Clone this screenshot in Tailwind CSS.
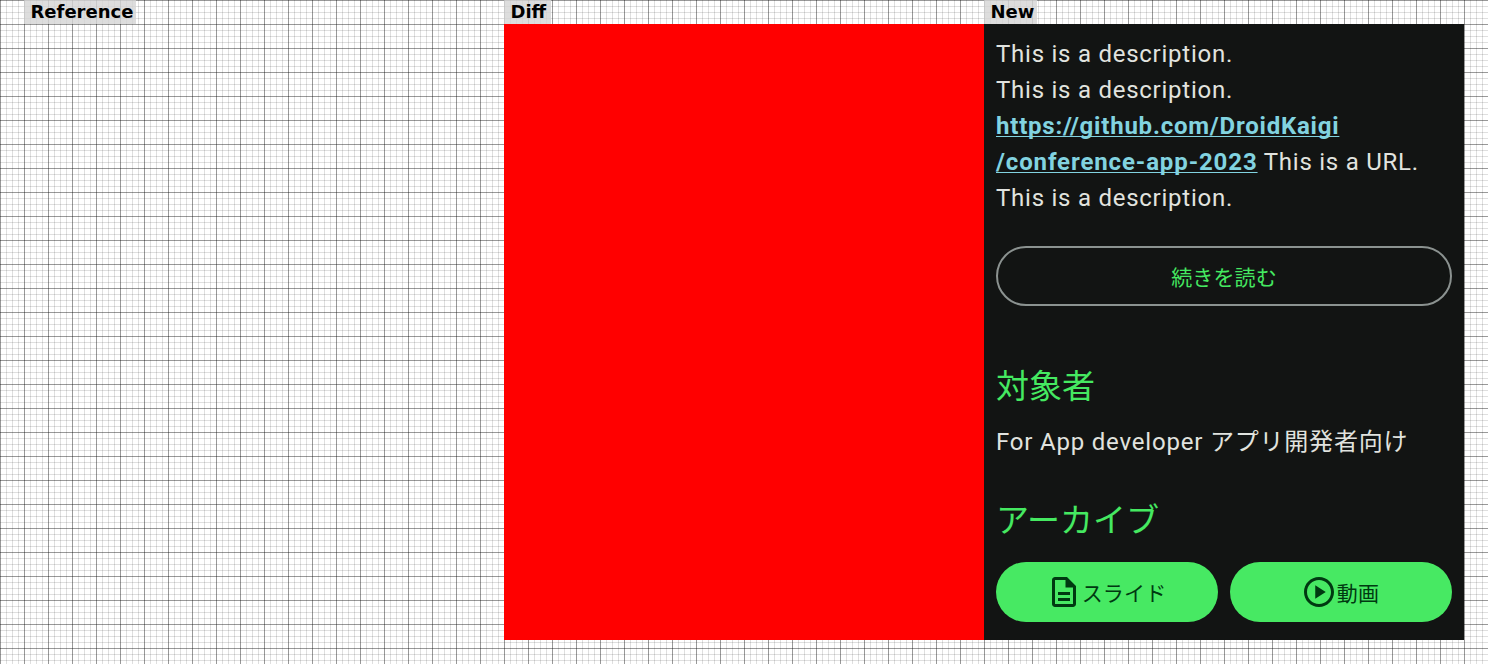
<!DOCTYPE html>
<html lang="ja">
<head>
<meta charset="utf-8">
<title>Screenshot comparison</title>
<script src="https://cdn.jsdelivr.net/npm/@tailwindcss/browser@4"></script>
</head>
<body class="w-[1488px] h-[664px] overflow-hidden bg-white bg-[linear-gradient(to_right,#00000050_1px,transparent_1px),linear-gradient(to_bottom,#00000050_1px,transparent_1px),linear-gradient(to_right,#00000020_1px,transparent_1px),linear-gradient(to_bottom,#00000020_1px,transparent_1px)] bg-[size:24px_24px,24px_24px,6px_6px,6px_6px] font-[Roboto,'Noto_Sans_CJK_JP',sans-serif]">
  <main class="grid grid-cols-[480px_480px_480px] grid-rows-[24px_616px] px-6">
    <h2 class="w-28 bg-[#d5d5d5]/80 pl-[6.5px] text-[18px] leading-[23px] font-bold text-black whitespace-nowrap font-['DejaVu_Sans',sans-serif]">Reference</h2>
    <h2 class="w-[47px] bg-[#d5d5d5]/80 pl-[6.5px] text-[18px] leading-[23px] font-bold text-black whitespace-nowrap font-['DejaVu_Sans',sans-serif]">Diff</h2>
    <h2 class="w-[53px] bg-[#d5d5d5]/80 pl-[6.5px] text-[18px] leading-[23px] font-bold text-black whitespace-nowrap font-['DejaVu_Sans',sans-serif]">New</h2>
    <div></div>
    <div class="bg-[#ff0000]"></div>
    <section class="flex flex-col bg-[#121413] px-3 pt-3 text-[#e1e3df]">
      <p class="text-[24px] leading-9 tracking-[0.75px] whitespace-nowrap">This is a description.<br>This is a description.<br><a class="font-bold text-[#82d3e0] underline decoration-1 underline-offset-[2px] [text-decoration-skip-ink:none]"><span class="tracking-[0.79px]">https://github.com/DroidKaigi</span><br><span class="tracking-[0.88px]">/conference-app-2023</span></a> This is a URL.<br>This is a description.</p>
      <button class="mt-[30px] h-[60px] rounded-full border-2 border-[#8b9290] text-[21px] leading-[30px] tracking-[0.15px] text-[#45e961]"><span class="block pt-[3px]">続きを読む</span></button>
      <h3 class="mt-[60px] text-[33px] leading-[42px] text-[#45e961]">対象者</h3>
      <p class="mt-4 text-[24px] leading-9 tracking-[0.8px] whitespace-nowrap">For App developer アプリ開発者向け</p>
      <h3 class="mt-10 text-[33px] leading-[42px] text-[#45e961]">アーカイブ</h3>
      <div class="mt-5 grid grid-cols-2 gap-3 text-[21px] leading-[30px] tracking-[0.15px] text-[#003911]">
        <button class="flex h-[60px] items-center justify-center rounded-full bg-[#47e963] pr-[2px]">
          <svg class="size-9" viewBox="0 0 24 24" fill="currentColor"><path d="M8 16h8v2H8zm0-4h8v2H8zm6-10H6c-1.100 0-2 .9-2 2v16c0 1.100.89 2 1.990 2H18c1.100 0 2-.9 2-2V8l-6-6zm4 18H6V4h7v5h5v11z"/></svg>
          <span class="pt-[3px]">スライド</span>
        </button>
        <button class="flex h-[60px] items-center justify-center rounded-full bg-[#47e963] pr-[2px]">
          <svg class="size-9" viewBox="0 0 24 24" fill="currentColor"><path d="M12 2C6.480 2 2 6.480 2 12s4.480 10 10 10 10-4.480 10-10S17.520 2 12 2zm0 18c-4.410 0-8-3.590-8-8s3.590-8 8-8 8 3.590 8 8-3.590 8-8 8zM9.500 16.500l7-4.500-7-4.500z"/></svg>
          <span class="pt-[3px]">動画</span>
        </button>
      </div>
    </section>
  </main>
</body>
</html>
